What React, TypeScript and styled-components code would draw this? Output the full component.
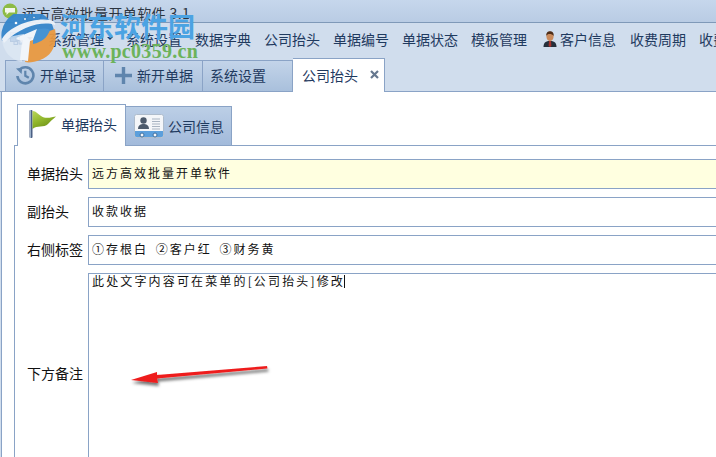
import React from "react";
import styled, { createGlobalStyle } from "styled-components";

const GlobalStyle = createGlobalStyle`
  html, body {
    margin: 0;
    padding: 0;
    background: #fff;
  }
  body {
    font-family: "Noto Sans CJK SC", "Liberation Sans", sans-serif;
  }
`;

const borderBlue = "#8aa3c6";

const menuItems = ["系统设置", "数据字典", "公司抬头", "单据编号", "单据状态", "模板管理"];
const fields = [
  { label: "单据抬头", value: "远方高效批量开单软件", highlight: true },
  { label: "副抬头", value: "收款收据" },
  { label: "右侧标签", value: "①存根白 ②客户红 ③财务黄" },
];

const AppIcon = () => (
  <svg width="16" height="16" viewBox="0 0 16 16">
    <circle cx="8" cy="8" r="7.5" fill="#8dbb45" />
    <path d="M3 5 H13 V9.500 H7 L4.500 12 V9.500 H3 Z" fill="#f4f8ea" />
  </svg>
);

const SiteLogo = () => (
  <svg width="58" height="50" viewBox="0 0 58 50">
    <g opacity="0.94">
      <path d="M2 27 A26 25 0 0 1 54 16 L54 24 C42 22 18 22 2 27 Z" fill="#3585cb" />
      <path d="M55 15 C58 30 52 42 40 46 C35 48 29 49 25 48 L30 24 Z" fill="#e9983f" />
      <path d="M2 25 C3 38 11 46 22 48 L24 20 C16 21 8 23 2 25 Z" fill="#dfe9f4" opacity="0.8" />
      <path d="M33 17 C40 14 46 14 50 16 C47 24 42 28 33 30 Z" fill="#3f8fd2" />
      <path d="M2 25 C9 12 34 3 50 6 C54 7 56 9 55 11 C44 7 22 11 4 29 Z" fill="#eef3f9" />
      <path d="M16 24 L37 15 L33 26 L30 27 L28 47 L20 46 L22 28 Z" fill="#f4f7fb" />
      <circle cx="16" cy="9" r="1.300" fill="#fff" />
      <circle cx="25" cy="5" r="1" fill="#fff" />
      <circle cx="34" cy="3.500" r="0.800" fill="#fff" />
    </g>
  </svg>
);

const GridIcon = () => (
  <svg width="13" height="13" viewBox="0 0 13 13">
    <rect x="0.500" y="0.500" width="7" height="9" fill="#6f9ad0" stroke="#4d79b3" />
    <rect x="6" y="5" width="3.500" height="3.500" fill="#b9cfe9" stroke="#4d79b3" />
    <rect x="9" y="8.500" width="3.500" height="3.500" fill="#b9cfe9" stroke="#4d79b3" />
    <rect x="4" y="9.500" width="3.500" height="3" fill="#b9cfe9" stroke="#4d79b3" />
  </svg>
);

const PersonIcon = () => (
  <svg width="14" height="16" viewBox="0 0 14 16">
    <path d="M0.500 16 C0.500 11.500 3 10 7 10 C11 10 13.500 11.500 13.500 16 Z" fill="#26303c" />
    <path d="M6 10 H8 L8.400 15 L7 16 L5.600 15 Z" fill="#a8322c" />
    <ellipse cx="7" cy="5.500" rx="3.600" ry="4.600" fill="#c98a5c" />
    <path d="M3.300 5 C3 1.500 5 0.300 7 0.300 C9 0.300 11 1.500 10.700 5 C9.800 3.400 8 3 6.600 3 C5 3 4 3.600 3.300 5 Z" fill="#4e2c16" />
  </svg>
);

const HistoryIcon = () => (
  <svg width="20" height="20" viewBox="0 0 20 20" fill="none">
    <path d="M4.200 5.200 A8 8 0 1 1 2.400 11" stroke="#5f85ad" strokeWidth="2.600" />
    <path d="M1 3.400 L7.200 2.800 L6.600 9 Z" fill="#5f85ad" />
    <path d="M10.300 5.800 V10.800 L13.800 12.800" stroke="#5f85ad" strokeWidth="2.200" />
  </svg>
);

const PlusIcon = () => (
  <svg width="17" height="17" viewBox="0 0 17 17">
    <path d="M6.800 0 H10.200 V6.800 H17 V10.200 H10.200 V17 H6.800 V10.200 H0 V6.800 H6.800 Z" fill="#5f85ad" />
  </svg>
);

const CloseIcon = () => (
  <svg width="9" height="9" viewBox="0 0 9 9">
    <path d="M1 1 L8 8 M8 1 L1 8" stroke="#66788f" strokeWidth="2.200" />
  </svg>
);

const FlagIcon = () => (
  <svg width="28" height="28" viewBox="0 0 28 28">
    <defs>
      <linearGradient id="flagGreen" x1="0" y1="0" x2="0.600" y2="1">
        <stop offset="0" stopColor="#b9d65a" />
        <stop offset="0.550" stopColor="#8fb52a" />
        <stop offset="1" stopColor="#6c8f18" />
      </linearGradient>
    </defs>
    <rect x="0.500" y="0" width="3" height="28" rx="1" fill="#4a5f83" />
    <rect x="1" y="0" width="1" height="28" fill="#9bb0c9" />
    <path d="M3.500 1 C8 1 10 6 15 7.500 C19 8.500 24 7 27 6.500 C24 9 21 11.500 19 14 C15 18 8 15 3.500 19 Z" fill="url(#flagGreen)" />
  </svg>
);

const CardIcon = () => (
  <svg width="30" height="24" viewBox="0 0 30 24">
    <rect x="0.500" y="0.500" width="29" height="23" rx="2" fill="#f4f6f9" stroke="#aebccc" />
    <path d="M1 17 H29 V22 A1.500 1.500 0 0 1 27.500 23 H2.500 A1.500 1.500 0 0 1 1 22 Z" fill="#5c9fdc" />
    <circle cx="9.500" cy="6.500" r="3.200" fill="#4c5a6c" />
    <path d="M4 15 C4 11 7 10 9.500 10 C12 10 15 11 15 15 Z" fill="#4c5a6c" />
    <path d="M18 5 H26 M18 7.500 H26 M18 10 H26 M18 12.500 H26 M18 15 H26" stroke="#a9b4c2" />
    <circle cx="8" cy="21" r="2" fill="#f4f6f9" stroke="#3f6f9f" />
    <circle cx="21" cy="21" r="2" fill="#f4f6f9" stroke="#3f6f9f" />
  </svg>
);

const ArrowDrawing = () => (
  <svg width="146" height="28" viewBox="0 0 146 28">
    <defs>
      <filter id="arrowShadow" x="-10%" y="-40%" width="120%" height="200%">
        <feDropShadow dx="1" dy="3" stdDeviation="1.800" floodColor="#000" floodOpacity="0.550" />
      </filter>
    </defs>
    <path
      d="M1 16 L27 8 L27 11 L137 2 L137.500 4.500 L27 14.500 L28 19 Z"
      fill="#ee1c1c"
      filter="url(#arrowShadow)"
    />
  </svg>
);

export default function App() {
  return (
    <Root>
      <GlobalStyle />
      <TitleBar>
        <AppIcon />
        <TitleText>远方高效批量开单软件 3.1</TitleText>
      </TitleBar>

      <MenuBar>
        <MenuIconButton>
          <GridIcon />
          <Caret />
        </MenuIconButton>
        <MenuDropdown>
          系统管理
          <Caret />
        </MenuDropdown>
        {menuItems.map((item) => (
          <MenuItem key={item}>{item}</MenuItem>
        ))}
        <MenuWithIcon>
          <PersonIcon />
          客户信息
        </MenuWithIcon>
        <MenuItem>收费周期</MenuItem>
        <MenuItem>收费项目</MenuItem>
      </MenuBar>

      <TabStrip>
        <PageTab $pad={9}>
          <HistoryIcon />
          开单记录
        </PageTab>
        <PageTab $pad={11}>
          <PlusIcon />
          新开单据
        </PageTab>
        <PageTab $pad={7} $wide>
          系统设置
        </PageTab>
        <ActivePageTab>
          公司抬头
          <CloseIcon />
        </ActivePageTab>
      </TabStrip>

      <PageBody>
        <InnerTabs>
          <ActiveInnerTab>
            <FlagIcon />
            单据抬头
          </ActiveInnerTab>
          <InnerTab>
            <CardIcon />
            公司信息
          </InnerTab>
        </InnerTabs>

        <FormPanel>
          {fields.map((field) => (
            <FieldRow key={field.label}>
              <FieldLabel>{field.label}</FieldLabel>
              <FieldInput $highlight={field.highlight}>{field.value}</FieldInput>
            </FieldRow>
          ))}
          <NotesRow>
            <NotesLabel>下方备注</NotesLabel>
            <NotesBox>
              此处文字内容可在菜单的[公司抬头]修改
              <TextCaret />
            </NotesBox>
          </NotesRow>
        </FormPanel>
      </PageBody>

      <Watermark>
        <LogoSpot>
          <SiteLogo />
        </LogoSpot>
        <WatermarkName>河东软件园</WatermarkName>
        <WatermarkUrl>www.pc0359.cn</WatermarkUrl>
      </Watermark>

      <ArrowOverlay>
        <ArrowDrawing />
      </ArrowOverlay>
    </Root>
  );
}

const Root = styled.div`
  position: relative;
  display: flex;
  flex-direction: column;
  width: 716px;
  height: 457px;
  overflow: hidden;
  background: #d0dded;
`;

const TitleBar = styled.div`
  display: flex;
  align-items: center;
  gap: 4px;
  box-sizing: border-box;
  height: 23px;
  padding-left: 2px;
  background: linear-gradient(#c6d7ec, #b9cce4);
  border-bottom: 1px solid #7f99b8;
`;

const TitleText = styled.span`
  font-size: 14px;
  line-height: 22px;
  padding-top: 3px;
  color: #2b3440;
  letter-spacing: 0.4px;
  white-space: nowrap;
`;

const MenuBar = styled.div`
  display: flex;
  align-items: center;
  gap: 13px;
  height: 37px;
  padding: 0 0 6px 10px;
  box-sizing: border-box;
  white-space: nowrap;
`;

const MenuIconButton = styled.span`
  flex: none;
  display: flex;
  align-items: center;
  gap: 4px;
  margin-right: 2px;
`;

const MenuItem = styled.span`
  flex: none;
  font-size: 14px;
  line-height: 20px;
  color: #1f3a5f;
`;

const MenuDropdown = styled(MenuItem)`
  display: flex;
  align-items: center;
  gap: 3px;
`;

const MenuWithIcon = styled(MenuItem)`
  display: flex;
  align-items: center;
  gap: 3px;
  margin: 0 1px 0 3px;
`;

const Caret = styled.i`
  width: 0;
  height: 0;
  border-left: 3px solid transparent;
  border-right: 3px solid transparent;
  border-top: 3px solid #1f3a5f;
`;

const TabStrip = styled.div`
  display: flex;
  align-items: flex-end;
  height: 32px;
  padding-left: 5px;
  box-sizing: border-box;
  border-bottom: 1px solid ${borderBlue};
`;

const PageTab = styled.div<{ $pad: number; $wide?: boolean }>`
  display: flex;
  align-items: center;
  gap: 5px;
  box-sizing: border-box;
  width: ${(p) => (p.$wide ? 90 : 99)}px;
  height: 31px;
  padding: 0 0 2px ${(p) => p.$pad}px;
  background: linear-gradient(#c3d4e9, #a9c0dc);
  border: 1px solid ${borderBlue};
  border-bottom: none;
  border-left-width: 0;
  font-size: 14px;
  color: #1f3a5f;

  &:first-child {
    border-left-width: 1px;
  }
`;

const ActivePageTab = styled.div`
  display: flex;
  align-items: center;
  gap: 12px;
  box-sizing: border-box;
  width: 92px;
  height: 34px;
  margin-bottom: -1px;
  padding: 0 0 2px 9px;
  background: #fff;
  border: 1px solid ${borderBlue};
  border-bottom: none;
  border-left: none;
  font-size: 14px;
  color: #1f3a5f;
  position: relative;
  z-index: 1;
`;

const PageBody = styled.div`
  flex: 1;
  margin-left: 1px;
  padding: 12px 0 0 12px;
  background: #fff;
  border-left: 1px solid ${borderBlue};
  display: flex;
  flex-direction: column;
`;

const InnerTabs = styled.div`
  display: flex;
  align-items: flex-end;
  padding-left: 3px;
  height: 41px;
  flex: none;
`;

const ActiveInnerTab = styled.div`
  display: flex;
  align-items: center;
  gap: 4px;
  box-sizing: border-box;
  width: 109px;
  height: 42px;
  margin-bottom: -1px;
  padding: 0 0 3px 11px;
  background: #fff;
  border: 1px solid ${borderBlue};
  border-bottom: none;
  font-size: 14px;
  color: #1f3a5f;
  position: relative;
  z-index: 1;
`;

const InnerTab = styled.div`
  display: flex;
  align-items: center;
  gap: 4px;
  box-sizing: border-box;
  width: 106px;
  height: 39px;
  padding: 0 0 1px 8px;
  background: linear-gradient(#bccfe6, #a2badb);
  border: 1px solid ${borderBlue};
  border-left: none;
  border-bottom: none;
  font-size: 14px;
  color: #1f3a5f;
`;

const FormPanel = styled.div`
  flex: 1;
  display: flex;
  flex-direction: column;
  gap: 8px;
  padding-top: 13px;
  border-top: 1px solid ${borderBlue};
  border-left: 1px solid ${borderBlue};
`;

const FieldRow = styled.div`
  display: flex;
  align-items: center;
  height: 30px;
  flex: none;
`;

const FieldLabel = styled.div`
  flex: none;
  box-sizing: border-box;
  width: 69px;
  padding: 0 0 2px 12px;
  font-size: 14px;
  color: #111;
  white-space: nowrap;
`;

const FieldInput = styled.div<{ $highlight?: boolean }>`
  flex: none;
  box-sizing: border-box;
  width: 660px;
  height: 30px;
  margin-left: 4px;
  padding-left: 3px;
  line-height: 26px;
  font-size: 12px;
  letter-spacing: 2px;
  word-spacing: 3px;
  color: #111;
  white-space: nowrap;
  background: ${(p) => (p.$highlight ? "#ffffe0" : "#fff")};
  border: 1px solid ${borderBlue};
`;

const NotesRow = styled.div`
  flex: 1;
  display: flex;
  align-items: stretch;
`;

const NotesLabel = styled(FieldLabel)`
  padding-top: 90px;
`;

const NotesBox = styled.div`
  flex: none;
  box-sizing: border-box;
  width: 660px;
  margin-left: 4px;
  padding-left: 3px;
  font-size: 12px;
  line-height: 14px;
  letter-spacing: 2.15px;
  color: #111;
  white-space: nowrap;
  border: 1px solid ${borderBlue};
  border-bottom: none;
`;

const TextCaret = styled.span`
  display: inline-block;
  width: 1px;
  height: 13px;
  margin-left: -1px;
  vertical-align: -2px;
  background: #111;
`;

const Watermark = styled.div`
  position: absolute;
  left: 0;
  top: 14px;
  width: 200px;
  height: 50px;
  pointer-events: none;
`;

const LogoSpot = styled.div`
  position: absolute;
  left: 0;
  top: 0;
`;

const WatermarkName = styled.div`
  position: absolute;
  left: 60px;
  top: -4px;
  font-size: 27px;
  font-weight: 700;
  line-height: 32px;
  color: #4ba3e3;
  white-space: nowrap;
`;

const WatermarkUrl = styled.div`
  position: absolute;
  left: 62px;
  top: 27px;
  font-family: "Liberation Serif", serif;
  font-size: 20px;
  font-weight: 700;
  line-height: 20px;
  letter-spacing: 0.3px;
  color: #6cb35b;
  white-space: nowrap;
`;

const ArrowOverlay = styled.div`
  position: absolute;
  left: 130px;
  top: 364px;
  line-height: 0;
  pointer-events: none;
`;
